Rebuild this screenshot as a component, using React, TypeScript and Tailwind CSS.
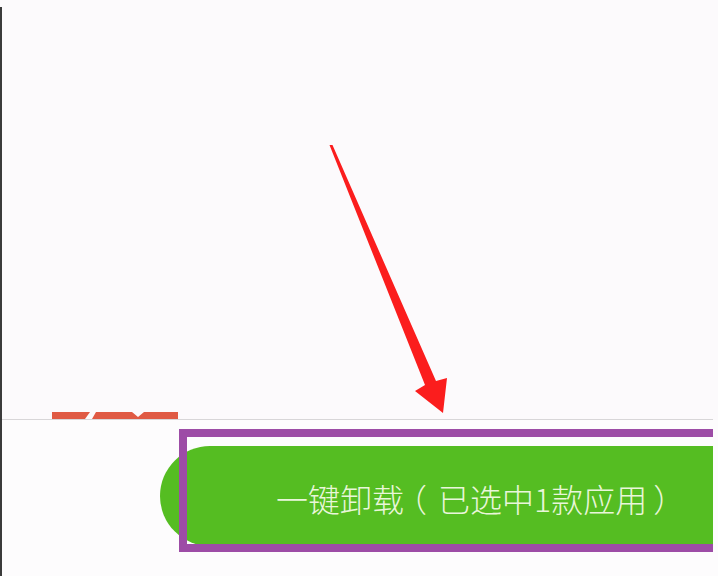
import React from "react";

function RedBar() {
  return (
    <svg width="126" height="7" viewBox="0 0 126 7" className="block">
      <polygon points="0,0 38,0 33,7 0,7" fill="#e05a44" />
      <polygon points="44,0 80,0 86,5 92,0 126,0 126,7 40,7" fill="#e05a44" />
    </svg>
  );
}

function Arrow() {
  return (
    <svg
      width="718"
      height="576"
      viewBox="0 0 718 576"
      className="absolute left-0 top-0 pointer-events-none"
    >
      <polygon
        points="329.5,145 332.5,145 436,381 447,378 443,413 415,391 425,385"
        fill="#fb1d1d"
      />
    </svg>
  );
}

export default function App() {
  return (
    <div
      className="relative w-[718px] h-[576px] overflow-hidden bg-[#fcfafc] pt-[7px]"
      style={{ fontFamily: '"Noto Sans CJK SC", "Noto Sans", sans-serif' }}
    >
      <div className="h-[569px] border-l-[2px] border-[#3b3b3b] flex flex-col">
        <div className="w-[711px] h-[413px] border-b border-[#d8d6d8] flex flex-col justify-end">
          <div className="ml-[50px]">
            <RedBar />
          </div>
        </div>
        <div className="flex-1 bg-[#fdfcfd]">
          <div className="ml-[158px] mt-[26px] h-[100px] w-[553px] rounded-l-full bg-[#55bd22] flex items-center pl-[116px] pt-[4px]">
            <span className="text-[32px] leading-none font-light text-[#e9f6da] whitespace-nowrap">
              一键卸载<span className="[font-feature-settings:'halt'] ml-[7px] mr-[11px]">（</span>已选中1款应用<span className="ml-[6px]">）</span>
            </span>
          </div>
        </div>
      </div>
      <div className="absolute left-[179px] top-[429px] w-[534px] h-[123px] border-[8px] border-r-0 border-[#9d4ca6]" />
      <Arrow />
    </div>
  );
}
